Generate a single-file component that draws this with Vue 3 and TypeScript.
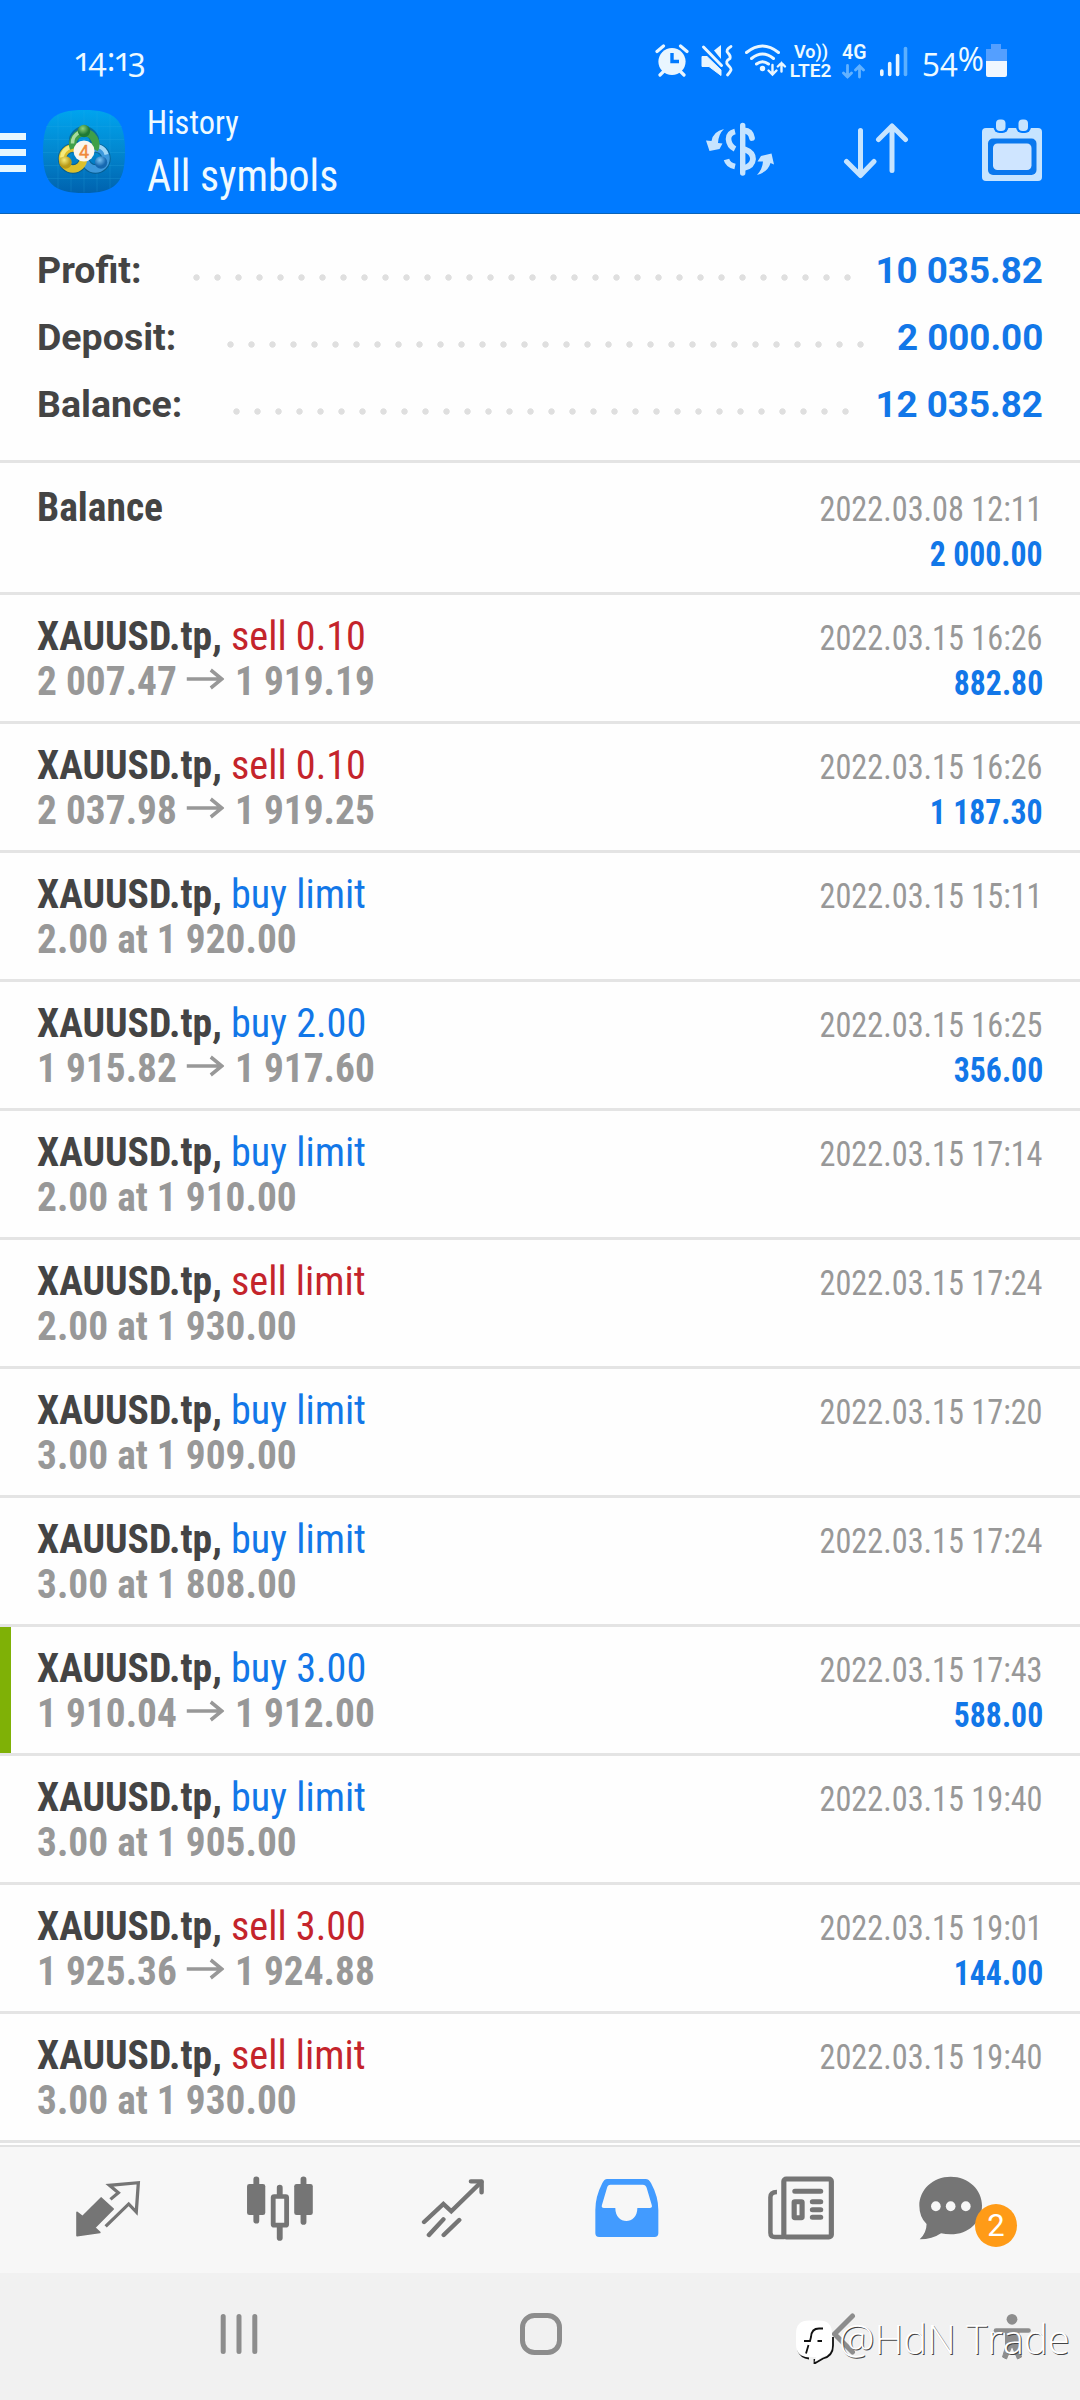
<script setup lang="ts">
interface Total { label: string; value: string; start: number; dots: number }
interface Deal {
  symbol: string
  action?: string
  side?: 'buy' | 'sell'
  open?: string
  close?: string
  note?: string
  time: string
  amount?: string
  marked?: boolean
}

const totals: Total[] = [
  { label: 'Profit:', value: '10 035.82', start: 156, dots: 32 },
  { label: 'Deposit:', value: '2 000.00', start: 190, dots: 31 },
  { label: 'Balance:', value: '12 035.82', start: 196, dots: 30 },
]

const S = 'XAUUSD.tp,'
const deals: Deal[] = [
  { symbol: 'Balance', time: '2022.03.08 12:11', amount: '2 000.00' },
  { symbol: S, action: 'sell 0.10', side: 'sell', open: '2 007.47', close: '1 919.19', time: '2022.03.15 16:26', amount: '882.80' },
  { symbol: S, action: 'sell 0.10', side: 'sell', open: '2 037.98', close: '1 919.25', time: '2022.03.15 16:26', amount: '1 187.30' },
  { symbol: S, action: 'buy limit', side: 'buy', note: '2.00 at 1 920.00', time: '2022.03.15 15:11' },
  { symbol: S, action: 'buy 2.00', side: 'buy', open: '1 915.82', close: '1 917.60', time: '2022.03.15 16:25', amount: '356.00' },
  { symbol: S, action: 'buy limit', side: 'buy', note: '2.00 at 1 910.00', time: '2022.03.15 17:14' },
  { symbol: S, action: 'sell limit', side: 'sell', note: '2.00 at 1 930.00', time: '2022.03.15 17:24' },
  { symbol: S, action: 'buy limit', side: 'buy', note: '3.00 at 1 909.00', time: '2022.03.15 17:20' },
  { symbol: S, action: 'buy limit', side: 'buy', note: '3.00 at 1 808.00', time: '2022.03.15 17:24' },
  { symbol: S, action: 'buy 3.00', side: 'buy', open: '1 910.04', close: '1 912.00', time: '2022.03.15 17:43', amount: '588.00', marked: true },
  { symbol: S, action: 'buy limit', side: 'buy', note: '3.00 at 1 905.00', time: '2022.03.15 19:40' },
  { symbol: S, action: 'sell 3.00', side: 'sell', open: '1 925.36', close: '1 924.88', time: '2022.03.15 19:01', amount: '144.00' },
  { symbol: S, action: 'sell limit', side: 'sell', note: '3.00 at 1 930.00', time: '2022.03.15 19:40' },
]
</script>

<template>
  <div class="screen">
    <header class="top">
      <div class="status">
        <span class="clock">14:13</span>
        <div class="sys">
          <svg width="34" height="34" viewBox="655 44 34 34">
            <circle cx="672" cy="61.5" r="13.6" fill="#e9f6ff" />
            <path d="M657 51.500L663.500 46M687 51.500L680.500 46M664 71L660 75M680 71L684 75" stroke="#e9f6ff" stroke-width="3.200" stroke-linecap="round" />
            <path d="M672 53V61.500H679" stroke="#007aff" stroke-width="3.400" fill="none" />
          </svg>
          <svg class="mute" width="33" height="34" viewBox="701 44 33 34">
            <path d="M702 56.500H707L721 70V75.500L709 66.500H702Z" fill="#e9f6ff" stroke="#e9f6ff" stroke-width="1" />
            <path d="M714 50.500L721 45V59Z" fill="#e9f6ff" />
            <path d="M703.500 47L721.500 65.500" stroke="#e9f6ff" stroke-width="3" stroke-linecap="round" />
            <path d="M731 46.500Q725 50 728 53T730 58.500Q724.500 61.500 728 65T731 70T727.500 75" fill="none" stroke="#e9f6ff" stroke-width="2.800" stroke-linecap="round" />
          </svg>
          <svg class="wifi" width="43" height="34" viewBox="744 44 43 34">
            <g fill="none" stroke="#e9f6ff" stroke-width="3" stroke-linecap="round">
              <path d="M746.500 52.500Q762.500 39.500 778.500 52.500M751.500 58.500Q762.500 49.500 773.500 58.500M756.500 64Q762.500 59.500 768.500 64" />
              <path d="M772.500 65V74M768.500 70.500L772.500 74.500L776.500 70.500M781.500 71.500V63M777.800 66.500L781.500 63L785 66.500" stroke-width="2.400" />
            </g>
            <circle cx="762.500" cy="68.500" r="2.700" fill="#e9f6ff" />
          </svg>
          <span class="volte"><b>Vo))</b><b>LTE2</b></span>
          <span class="net"><b>4G</b>
            <svg width="24" height="15" viewBox="842 64 24 15"><path d="M847.500 65.500V77M843.500 73L847.500 77L851.500 73M859.500 77V66.500M855.500 70L859.500 66L863.500 70" fill="none" stroke="#63b2ff" stroke-width="2.800" stroke-linecap="round" /></svg>
          </span>
          <svg class="signal" width="28" height="31" viewBox="880 46 28 31">
            <g stroke="#e9f6ff" stroke-width="3.600" stroke-linecap="round"><path d="M881.800 71V74.500M889.700 63.500V74.500M897.600 55.500V74.500" /><path d="M905.500 48.500V74.500" stroke="#5cb0ff" /></g>
          </svg>
          <span class="pct">54%</span>
          <svg class="batt" width="21" height="33" viewBox="986 44 21 33"><path d="M991 44H1001V49H1007V61H986V49H991Z" fill="#549fff" /><path d="M986 61H1007V75Q1007 77 1005 77H988Q986 77 986 75Z" fill="#f0f7ff" /></svg>
        </div>
      </div>

      <div class="bar">
        <div class="burger"><i /><i /><i /></div>
        <svg class="logo" width="82" height="83" viewBox="43 109.500 82 83">
          <defs>
            <linearGradient id="lg" x1="0" y1="0" x2="0" y2="1"><stop offset="0" stop-color="#00a4ee" /><stop offset=".5" stop-color="#0287cf" /><stop offset="1" stop-color="#0062ae" /></linearGradient>
            <radialGradient id="gg" cx=".4" cy=".3"><stop offset="0" stop-color="#8fd27a" /><stop offset="1" stop-color="#1f7a35" /></radialGradient>
            <radialGradient id="gy" cx=".4" cy=".3"><stop offset="0" stop-color="#f7ec7a" /><stop offset="1" stop-color="#b89a18" /></radialGradient>
            <radialGradient id="gb" cx=".4" cy=".3"><stop offset="0" stop-color="#7cc4f4" /><stop offset="1" stop-color="#1668b0" /></radialGradient>
          </defs>
          <path d="M84 109.500C115 109.500 125 119 125 151S115 192.500 84 192.500S43 183 43 151S53 109.500 84 109.500Z" fill="url(#lg)" />
          <path d="M58 114V188M71 111V191M84 110V192M97 111V191M110 114V188M46 126H122M44 139H124M43 152H125M44 165H124M47 178H121" stroke="#2fb0e8" stroke-width=".6" opacity=".35" />
          <g fill="none" stroke="#0d4560" stroke-width="9.500" opacity=".5">
            <circle cx="84" cy="141" r="10.500" /><circle cx="73" cy="158" r="10.500" /><circle cx="95.500" cy="158" r="10.500" />
          </g>
          <g fill="none" stroke-width="7.500">
            <circle cx="95.500" cy="158" r="10.500" stroke="#3c98dc" /><path d="M88 148A11.500 11.500 0 0 1 106.500 154" stroke="#9fd6f6" stroke-width="4" />
            <circle cx="73" cy="158" r="10.500" stroke="#dcc02c" /><path d="M62 157A11 11 0 0 1 71 146.500" stroke="#f5ea7c" stroke-width="4" />
            <path d="M73.500 148A11.500 11.500 0 1 1 94.500 149" stroke="#3f9f48" /><path d="M72.500 143A12 12 0 0 1 79 132" stroke="#a7dba0" stroke-width="3.500" />
          </g>
          <circle cx="84" cy="130.500" r="6.200" fill="url(#gg)" /><circle cx="65.500" cy="162" r="6.200" fill="url(#gy)" /><circle cx="101" cy="162" r="6.200" fill="url(#gb)" />
          <circle cx="84" cy="150.500" r="10.500" fill="#fbf6ee" />
          <text x="84" y="157" text-anchor="middle" font-family="Roboto, sans-serif" font-size="18" fill="#f08a3c" stroke="#f08a3c" stroke-width=".4">4</text>
        </svg>
        <div class="titles"><span class="sub">History</span><span class="title">All symbols</span></div>
        <div class="tools">
          <svg width="70" height="56" viewBox="705 122 70 56">
            <path d="M742.700 125.500V173" stroke="#c6e4ff" stroke-width="5.400" stroke-linecap="round" />
            <path d="M744 130.500Q751 131 752 138M745 149.500Q753 152.500 753 159Q752.500 166 744 168" stroke="#c6e4ff" stroke-width="5.800" stroke-linecap="round" fill="none" />
            <path d="M735 131.500Q728.500 133 728.500 139Q729 146 735 149M726.500 159.500Q728 165 735 166.500" stroke="#c6e4ff" stroke-width="5.600" fill="none" />
            <path d="M724 129Q713 131.500 711.500 141L706 140.500L709.500 151L719.500 149L722.500 143.500L718 143Q718.500 134 724 129Z" fill="#c6e4ff" />
            <path d="M757 175Q768 172 770.500 163L774 164.500L771.500 153.500L761 156L757.500 161.500L763 161.500Q762.500 169 757 175Z" fill="#c6e4ff" />
          </svg>
          <svg width="66" height="57" viewBox="843 122 66 57"><path d="M860.500 130.500V175M846.500 161.500L860.500 175.500L874 161.500M892 170.500V126M878.500 139.500L892 126L905.500 139.500" fill="none" stroke="#c6e4ff" stroke-width="5" stroke-linecap="round" stroke-linejoin="round" /></svg>
          <svg width="62" height="64" viewBox="981 118 62 64">
            <rect x="982" y="128" width="60" height="53" rx="4" fill="#c6e4ff" />
            <rect x="988" y="138.500" width="48.500" height="36.500" rx="5" fill="#0a78ee" />
            <rect x="993" y="143.500" width="38.500" height="26.500" rx="4.500" fill="#cfe5ff" />
            <rect x="993.500" y="117" width="15" height="16" rx="6" fill="#007aff" /><rect x="1016" y="117" width="15" height="16" rx="6" fill="#007aff" />
            <rect x="996" y="119.500" width="9.500" height="11.500" rx="4" fill="#c6e4ff" /><rect x="1018.500" y="119.500" width="9.500" height="11.500" rx="4" fill="#c6e4ff" />
          </svg>
        </div>
      </div>
    </header>

    <section class="totals">
      <div v-for="t in totals" :key="t.label" class="total">
        <span class="tlabel" :style="{ width: t.start + 'px' }">{{ t.label }}</span>
        <i class="leader" :style="{ width: t.dots * 21 + 'px' }" />
        <span class="tvalue">{{ t.value }}</span>
      </div>
    </section>

    <main class="list">
      <article v-for="(d, i) in deals" :key="i" class="deal" :class="{ marked: d.marked }">
        <div class="left">
          <p class="head"><b>{{ d.symbol }}</b><span v-if="d.action" :class="d.side">{{ d.action }}</span></p>
          <p v-if="d.open" class="detail">{{ d.open }}<svg width="40" height="24" viewBox="0 0 40 24"><path d="M1 12H37M26 3L37.500 12L26 21" fill="none" stroke="#989898" stroke-width="3.600" /></svg>{{ d.close }}</p>
          <p v-else-if="d.note" class="detail">{{ d.note }}</p>
        </div>
        <div class="right"><p class="time">{{ d.time }}</p><p v-if="d.amount" class="amount">{{ d.amount }}</p></div>
      </article>
    </main>

    <nav class="tabs">
      <svg width="66" height="60" viewBox="217 178 191.700 180" preserveAspectRatio="none">
        <path d="M293 235L328 268L274 324L289 338L223 348V278L239 291Z" fill="#757575" stroke="#757575" stroke-width="5" stroke-linejoin="round" />
        <path d="M320 239L343 219L317 197L401 189L395 277L373 253L306 320" fill="none" stroke="#757575" stroke-width="9.500" />
      </svg>
      <svg width="68" height="66" viewBox="715 168 197.500 198" preserveAspectRatio="none">
        <path d="M745 178V302M882 178V306M813 203V225M813 320V354" stroke="#757575" stroke-width="17" stroke-linecap="round" />
        <rect x="718" y="192" width="53" height="93" rx="7" fill="#757575" /><rect x="855" y="192" width="54" height="93" rx="7" fill="#757575" />
        <rect x="794" y="229.500" width="39" height="86" rx="3" fill="#f7f7f7" stroke="#757575" stroke-width="14" />
      </svg>
      <svg width="64" height="60" viewBox="1223 174 185.900 180" preserveAspectRatio="none">
        <path d="M1232 306L1288 252L1311 274L1398 186M1246 345L1288 298M1289 345L1334 300" fill="none" stroke="#757575" stroke-width="13" stroke-linecap="round" />
        <path d="M1368 184H1399V217" fill="none" stroke="#757575" stroke-width="13" stroke-linecap="round" stroke-linejoin="round" />
      </svg>
      <svg width="64" height="58" viewBox="161 177 185.900 174" preserveAspectRatio="none">
        <path fill="#429bff" fill-rule="evenodd" d="M196 177H308Q318 177 324 190Q345 230 345 270V340Q345 351 334 351H173Q162 351 162 340V270Q162 230 182 190Q188 177 196 177ZM206 194H300Q308 194 311 203L326 256Q328 264 320 264H284C284 316 220 316 220 264H187Q179 264 181 256L196 203Q198 194 206 194Z" />
      </svg>
      <svg width="66" height="64" viewBox="664 168 191.700 192" preserveAspectRatio="none">
        <rect x="710" y="177" width="138" height="174" rx="7" fill="none" stroke="#757575" stroke-width="15" />
        <path d="M690 216Q671 216 671 232V338Q671 351 684 351H712" fill="none" stroke="#757575" stroke-width="13" />
        <path d="M742 214H817M793 245H817M793 269H817M793 292H817" stroke="#757575" stroke-width="15" stroke-linecap="round" />
        <rect x="740" y="245" width="23" height="48" rx="2" fill="none" stroke="#757575" stroke-width="15" />
      </svg>
      <div class="chat">
        <svg width="64" height="64" viewBox="1101 167 185.900 192" preserveAspectRatio="none">
          <path fill="#757575" d="M1193 169C1245 169 1284 208 1284 256S1245 342 1193 342Q1178 342 1165 339Q1140 357 1103 357Q1123 338 1123 311Q1102 290 1102 256C1102 208 1141 169 1193 169Z" />
          <g fill="#f7f7f7"><ellipse cx="1150" cy="258" rx="14" ry="15" /><ellipse cx="1193" cy="258" rx="14" ry="15" /><ellipse cx="1237" cy="258" rx="14" ry="15" /></g>
        </svg>
        <span class="badge">2</span>
      </div>
    </nav>

    <footer class="sysnav">
      <svg class="recents" width="40" height="42" viewBox="219 2313 40 42"><path d="M223.200 2316.500V2351.500M239 2316.500V2351.500M254.800 2316.500V2351.500" stroke="#8d8d8d" stroke-width="5" stroke-linecap="round" /></svg>
      <svg class="home" width="42" height="42" viewBox="0 0 42 42"><rect x="2.500" y="2.500" width="37" height="37" rx="12" fill="none" stroke="#8d8d8d" stroke-width="5" /></svg>
      <svg class="back" width="26" height="42" viewBox="832 2313 26 42"><path d="M852.500 2316L834.500 2334L852.500 2352" fill="none" stroke="#8d8d8d" stroke-width="5" stroke-linecap="round" /></svg>
      <svg class="person" width="38" height="48" viewBox="992.500 2312 38 48">
        <circle cx="1011.500" cy="2319.300" r="5.400" fill="#8d8d8d" />
        <path d="M995.500 2330.500H1028" stroke="#8d8d8d" stroke-width="4.600" stroke-linecap="round" />
        <path d="M1005 2331H1018.500L1018.500 2347L1021 2357L1017 2359L1011.500 2346L1006 2359L1002 2357L1005 2347Z" fill="#8d8d8d" stroke="#8d8d8d" stroke-width="1" stroke-linejoin="round" />
      </svg>
      <div class="mark">
        <svg width="40" height="44" viewBox="795 2320 40 44">
          <path d="M798 2350Q801 2358 809 2358.500M833 2337V2345.500Q833 2356 823 2358.500L814.500 2363.500V2359" fill="none" stroke="#111" stroke-width="1.800" />
          <path d="M809 2320.500H819Q832 2320.500 832 2333.500V2344Q832 2355 822 2357L814.500 2362L816 2357H809Q796 2357 796 2344V2333.500Q796 2320.500 809 2320.500Z" fill="#fff" />
          <path d="M823 2328.500H819Q811.500 2328.500 811 2337L810 2341H804M817.500 2341H822M808.500 2345L806 2353.500" fill="none" stroke="#111" stroke-width="1.800" />
        </svg>
        <span>@HdN Trade</span>
      </div>
    </footer>
  </div>
</template>

<style>
body { margin: 0; background: #fff; }
</style>

<style scoped>
.screen { width: 1080px; height: 2400px; display: flex; flex-direction: column; background: #fefefe; font-family: Roboto, sans-serif; overflow: hidden; }
svg { display: block; flex: none; }
p { margin: 0; }
.top { height: 214px; box-sizing: border-box; background: #007aff; border-bottom: 1px solid #0a63b8; }
.status { height: 100px; box-sizing: border-box; padding: 44px 73px 0 75px; display: flex; justify-content: space-between; align-items: flex-start; color: #eefaff; }
.clock, .pct { font-family: 'Open Sans', sans-serif; font-size: 33px; line-height: 34px; font-feature-settings: 'onum', 'pnum'; font-stretch: 100%; }
.clock { margin-top: -2px; }
.sys { display: flex; width: 352px; }
.mute { margin-left: 12px; }
.wifi { margin-left: 10px; }
.volte, .net { display: flex; flex-direction: column; font-size: 19.500px; line-height: 18px; white-space: nowrap; }
.volte b, .net b { font-weight: 600; }
.volte { margin-left: 3px; width: 42px; align-items: center; margin-top: -1px; }
.volte b { font-size: 18px; }
.volte b + b { font-size: 18px; margin-top: 1px; transform: scaleX(1.06); }
.net { margin-left: 10px; width: 24px; }
.net svg { margin-top: 2px; }
.signal { margin: 2px 0 0 14px; }
.pct { margin: -2px 0 0 14px; width: 64px; white-space: nowrap; transform: scaleX(.96); transform-origin: left; }
.bar { height: 112px; display: flex; align-items: flex-start; }
.burger { width: 26px; margin-top: 33px; display: flex; flex-direction: column; gap: 9.500px; }
.burger i { height: 6.500px; background: #e6f7ff; }
.logo { margin: 9.500px 0 0 17px; }
.titles { display: flex; flex-direction: column; margin-left: 22px; color: #effaff; font-stretch: 75%; white-space: nowrap; }
.titles span { transform-origin: left; }
.sub { font-size: 33.500px; line-height: 40px; margin-top: 3px; transform: scaleX(.97); }
.title { font-size: 43.500px; line-height: 56px; margin-top: 6px; transform: scaleX(.962); }
.tools { margin-left: auto; margin-right: 37px; display: flex; align-items: flex-start; }
.tools svg:nth-child(1) { margin: 22px 68px 0 0; }
.tools svg:nth-child(2) { margin: 22px 72px 0 0; }
.tools svg:nth-child(3) { margin: 18px 0 0 0; }

.totals { height: 249px; box-sizing: border-box; padding: 22.500px 37px 0 37px; border-bottom: 3px solid #e4e4e4; }
.total { display: flex; height: 67px; line-height: 67px; font-size: 37.500px; font-weight: 700; color: #444; }
.tlabel { flex: none; }
.leader { flex: none; height: 7px; margin-top: 37px; background: radial-gradient(circle at 3.500px 3.500px, #dfdfdf 2.800px, transparent 3.600px) 0 0 / 21px 7px repeat-x; }
.tvalue { margin-left: auto; color: #1277e8; transform: scaleX(.98); transform-origin: right; }

.deal { position: relative; height: 129px; box-sizing: border-box; padding: 19px 37px 0 37px; border-bottom: 3px solid #e4e4e4; display: flex; justify-content: space-between; font-stretch: 75%; line-height: 45px; white-space: pre; }
.deal:first-child { height: 132px; padding-top: 22px; }
.deal.marked::before { content: ''; position: absolute; left: 0; top: 0; bottom: 0; width: 10.500px; background: #7fb106; }
.left { font-size: 41px; color: #444; }
.head { display: flex; }
.head b { transform: scaleX(.965); transform-origin: left; }
.head span { margin-left: 2px; transform: scaleX(.98); transform-origin: left; }
.buy { color: #1277e8; }
.sell { color: #c4242b; }
.detail { display: flex; color: #989898; font-weight: 700; transform: scaleX(.96); transform-origin: left; }
.detail svg { margin: 8px 11px 0 9.500px; }
.right { font-size: 34.500px; padding-top: 2px; display: flex; flex-direction: column; align-items: flex-end; }
.right p { transform-origin: right; }
.time { color: #989898; transform: scaleX(.935); }
.amount { color: #1277e8; font-weight: 700; transform: scaleX(.92); }

.tabs { margin-top: 2px; height: 128px; box-sizing: border-box; border-top: 2px solid #e2e2e2; background: #f7f7f7; display: flex; align-items: flex-start; padding-left: 75px; }
.tabs > svg:nth-child(1) { margin-top: 32px; }
.tabs > svg:nth-child(2) { margin: 29px 0 0 105px; }
.tabs > svg:nth-child(3) { margin: 31px 0 0 107px; }
.tabs > svg:nth-child(4) { margin: 32px 0 0 110px; }
.tabs > svg:nth-child(5) { margin: 29px 0 0 109px; }
.chat { position: relative; margin: 29px 0 0 85px; }
.badge { position: absolute; left: 56px; top: 28px; width: 42px; height: 43px; border-radius: 50%; background: #ff9b17; color: #fff; font-size: 31px; line-height: 44px; text-align: center; }
.sysnav { position: relative; flex: 1; background: #f1f1f1; display: flex; align-items: flex-start; padding: 40px 0 0 219px; }
.home { margin-left: 261px; }
.back { margin-left: 270px; }
.person { margin: -1px 0 0 134.500px; }
.mark { position: absolute; left: 795px; top: 47px; display: flex; color: #fff; }
.mark span { font: 300 40px/54px 'Open Sans', sans-serif; margin: -8px 0 0 4px; text-shadow: 1px 1px 0 #444; white-space: nowrap; }
</style>
